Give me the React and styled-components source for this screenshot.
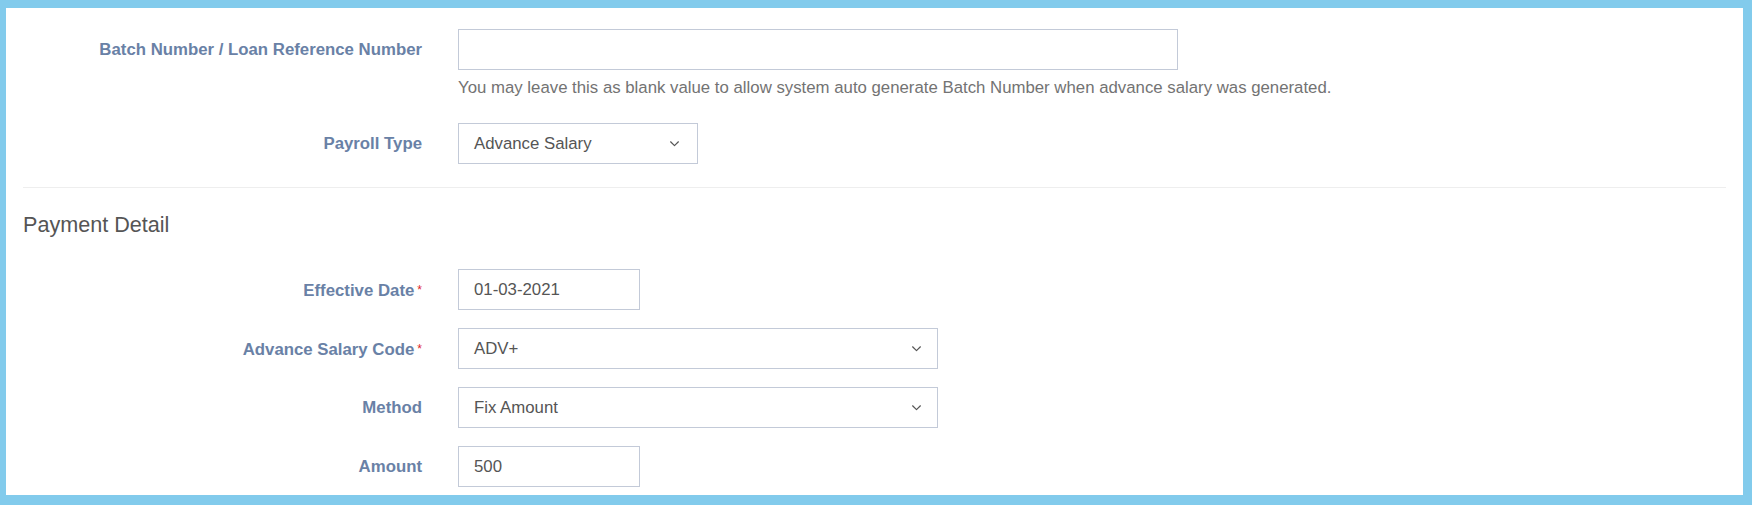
import React from "react";
import styled, { createGlobalStyle } from "styled-components";

const GlobalStyle = createGlobalStyle`
  html, body {
    margin: 0;
    padding: 0;
    background: #82cbec;
  }
  * { box-sizing: border-box; }
`;

const Frame = styled.div`
  height: 505px;
  padding: 8px 9px 10px 6px;
  background: #82cbec;
  font-family: "Liberation Sans", Arial, sans-serif;
`;

const Panel = styled.div`
  height: 100%;
  background: #ffffff;
  overflow: hidden;
  padding: 21px 17px 0 17px;
`;

const FormRow = styled.div`
  display: grid;
  grid-template-columns: 417px 1fr;
  align-items: start;
  margin-bottom: ${(p) => p.$gap ?? 18}px;
`;

const Label = styled.label`
  display: block;
  text-align: right;
  padding: 9px 18px 0 0;
  font-size: 16.8px;
  line-height: 24px;
  font-weight: 700;
  color: #6981a6;
  white-space: nowrap;
`;

const Required = styled.span`
  color: #e0262b;
  font-size: 12px;
  font-weight: 400;
  margin-left: 3px;
  vertical-align: 2px;
`;

const Field = styled.div`
  padding-left: 18px;
`;

const TextInput = styled.div`
  width: ${(p) => p.$width}px;
  height: 41px;
  border: 1px solid #c3cad8;
  background: #fff;
  padding: 0 15px;
  display: flex;
  align-items: center;
  font-size: 16.8px;
  color: #555555;
`;

const SelectBox = styled(TextInput)`
  justify-content: space-between;
  padding-right: ${(p) => p.$arrowPad ?? 16}px;
`;

const Help = styled.p`
  margin: 6px 0 0 0;
  font-size: 16.8px;
  line-height: 24px;
  color: #737373;
  white-space: nowrap;
`;

const Divider = styled.hr`
  border: 0;
  border-top: 1px solid #eeeeee;
  margin: 23px 0 0 0;
`;

const SectionTitle = styled.h4`
  margin: 25px 0 32px 0;
  font-size: 21.6px;
  line-height: 24px;
  font-weight: 400;
  color: #555555;
`;

const Chevron = () => (
  <svg width="9" height="6" viewBox="0 0 9 6" fill="none">
    <polyline
      points="0.6,0.8 4.5,4.6 8.4,0.8"
      stroke="#555"
      strokeWidth="1.2"
      strokeLinecap="round"
      strokeLinejoin="round"
    />
  </svg>
);

const Select = ({ width, value, arrowPad }) => (
  <SelectBox $width={width} $arrowPad={arrowPad}>
    <span>{value}</span>
    <Chevron />
  </SelectBox>
);

export default function App() {
  return (
    <>
      <GlobalStyle />
      <Frame>
        <Panel>
          <FormRow $gap={23}>
            <Label>Batch Number / Loan Reference Number</Label>
            <Field>
              <TextInput $width={720} />
              <Help>
                You may leave this as blank value to allow system auto generate Batch Number when advance salary was generated.
              </Help>
            </Field>
          </FormRow>
          <FormRow $gap={0}>
            <Label>Payroll Type</Label>
            <Field>
              <Select width={240} value="Advance Salary" arrowPad={18} />
            </Field>
          </FormRow>
          <Divider />
          <SectionTitle>Payment Detail</SectionTitle>
          <FormRow>
            <Label>
              Effective Date<Required>*</Required>
            </Label>
            <Field>
              <TextInput $width={182}>01-03-2021</TextInput>
            </Field>
          </FormRow>
          <FormRow>
            <Label>
              Advance Salary Code<Required>*</Required>
            </Label>
            <Field>
              <Select width={480} value="ADV+" />
            </Field>
          </FormRow>
          <FormRow>
            <Label>Method</Label>
            <Field>
              <Select width={480} value="Fix Amount" />
            </Field>
          </FormRow>
          <FormRow>
            <Label>Amount</Label>
            <Field>
              <TextInput $width={182}>500</TextInput>
            </Field>
          </FormRow>
        </Panel>
      </Frame>
    </>
  );
}
